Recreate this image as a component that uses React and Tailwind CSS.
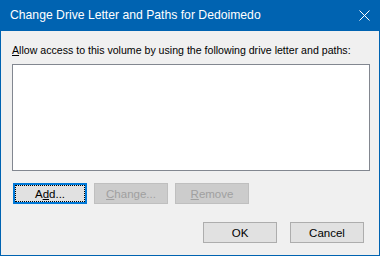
export default function App() {
  const font = { fontFamily: '"Liberation Sans", Arial, sans-serif' };
  return (
    <div
      className="w-[380px] h-[256px] bg-[#f0f0f0] border-x border-b border-[#0063b1] flex flex-col text-[11.5px] text-black"
      style={font}
    >
      <div className="h-[31px] bg-[#0063b1] -mx-px flex items-center justify-between pl-[10px] pr-[10px] text-white">
        <span className="text-[12.2px] leading-[14px] mt-[-1px] whitespace-nowrap">Change Drive Letter and Paths for Dedoimedo</span>
        <svg width="11" height="11" viewBox="0 0 11 11">
          <path d="M0.5 0.5 L10.5 10.5 M10.5 0.5 L0.5 10.5" stroke="white" strokeWidth="1" fill="none" />
        </svg>
      </div>
      <div className="flex flex-col pl-[11px] pt-[12px]">
        <div className="leading-[14px] whitespace-nowrap text-[10.6px]">
          <span className="underline underline-offset-1">A</span>llow access to this volume by using the following drive letter and paths:
        </div>
        <div className="mt-[7px] w-[358px] h-[107px] bg-white border border-[#828790]" />
        <div className="flex gap-[7px] mt-[12px] pl-px">
          <button className="w-[74px] h-[21px] bg-[#e1e1e1] border-2 border-[#0078d7] p-0 flex">
            <span className="flex-1 border border-dotted border-black flex items-center justify-center leading-[14px]">
              <span>A<span className="underline underline-offset-1">d</span>d...</span>
            </span>
          </button>
          <button className="w-[74px] h-[21px] bg-[#cccccc] border border-[#bfbfbf] text-[#a0a0a0] flex items-center justify-center leading-[14px]">
            <span><span className="underline underline-offset-1">C</span>hange...</span>
          </button>
          <button className="w-[74px] h-[21px] bg-[#cccccc] border border-[#bfbfbf] text-[#a0a0a0] flex items-center justify-center leading-[14px]">
            <span><span className="underline underline-offset-1">R</span>emove</span>
          </button>
        </div>
        <div className="flex gap-[13px] mt-[18px] pl-[191px]">
          <button className="w-[74px] h-[21px] bg-[#e1e1e1] border border-[#adadad] flex items-center justify-center leading-[14px]">
            OK
          </button>
          <button className="w-[74px] h-[21px] bg-[#e1e1e1] border border-[#adadad] flex items-center justify-center leading-[14px]">
            Cancel
          </button>
        </div>
      </div>
    </div>
  );
}
